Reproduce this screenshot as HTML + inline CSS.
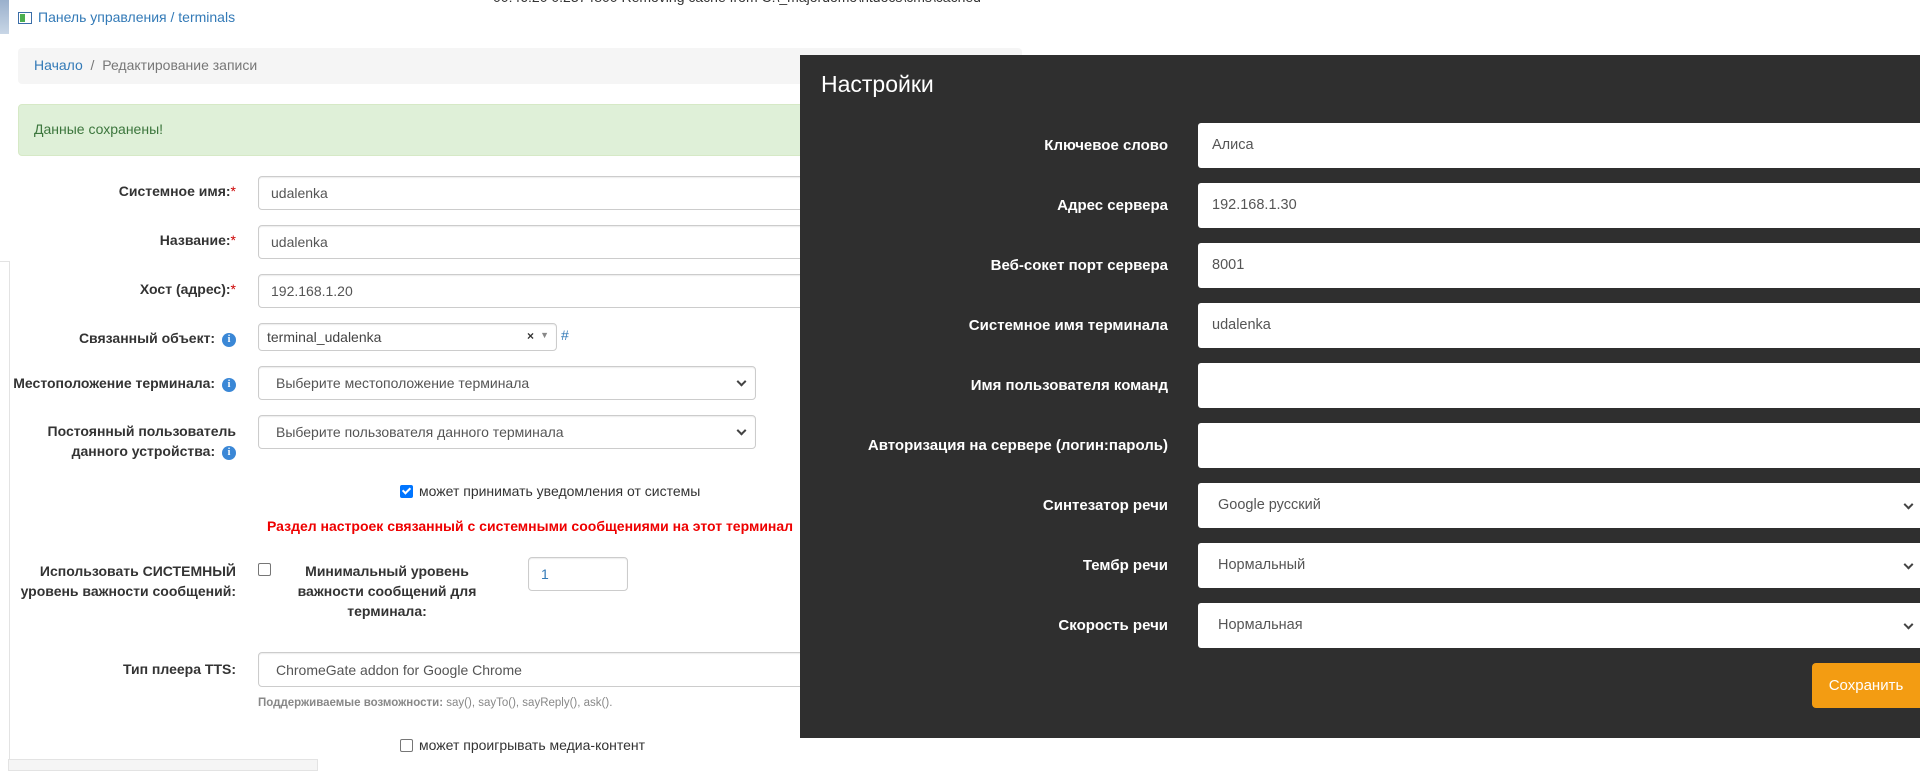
<!DOCTYPE html>
<html><head><meta charset="utf-8"><style>
*{box-sizing:border-box;margin:0;padding:0}
body{width:1920px;height:771px;overflow:hidden;background:#fff;font-family:"Liberation Sans",Arial,sans-serif;font-size:14px;color:#333;position:relative}
.a{position:absolute}
.lbl{position:absolute;right:1684px;font-weight:bold;text-align:right;white-space:nowrap;line-height:20px}
.inp{position:absolute;left:258px;border:1px solid #ccc;border-radius:4px;background:#fff;padding:0 12px;display:flex;align-items:center;color:#555;box-shadow:inset 0 1px 1px rgba(0,0,0,.075)}
.req{color:#c00;font-weight:normal}
.info{display:inline-block;width:14px;height:14px;border-radius:50%;background:#3a87d6;color:#fff;font-size:10px;text-align:center;line-height:14px;font-weight:bold;vertical-align:1px;margin-left:3px;font-family:"Liberation Serif",serif}
.chev{position:absolute;right:10px;top:50%;width:7px;height:7px;border-right:2px solid #444;border-bottom:2px solid #444;transform:translateY(-70%) rotate(45deg)}
.cb{display:inline-block;width:13px;height:13px;border:1px solid #767676;border-radius:2px;vertical-align:-2px;margin-right:6px;background:#fff}
.dk{position:absolute;left:800px;top:55px;width:1120px;height:683px;background:#2f2f2f}
.dl{position:absolute;right:752px;color:#fff;font-weight:bold;font-size:15px;text-align:right;white-space:nowrap;height:45px;line-height:45px}
.di{position:absolute;left:398px;width:722px;height:45px;background:#fff;border-radius:3px 0 0 3px;color:#555;font-size:14.5px;line-height:45px;padding-left:14px}
.di.s{padding-left:20px}
</style></head><body>
<div class="a" style="left:0;top:0;width:9px;height:34px;background:linear-gradient(#9ab0cc,#c8d6e6)"></div>
<div class="a" style="left:493px;top:-11px;font-size:14px;color:#333;white-space:nowrap">00:46:20 0.2374800 Removing cache from C:\_majordomo\htdocs\cms\cached</div>
<div class="a" style="left:18px;top:12px;width:14px;height:12px;border:1px solid #3a6da8;background:#fff"><div style="position:absolute;left:1px;top:1px;width:5px;height:8px;background:#4caf50"></div></div>
<div class="a" style="left:38px;top:9px;color:#337ab7;font-size:14px">Панель управления / terminals</div>
<div class="a" style="left:18px;top:48px;width:1004px;height:36px;background:#f5f5f5;border-radius:4px"></div>
<div class="a" style="left:34px;top:57px;color:#777"><span style="color:#337ab7">Начало</span>&nbsp; / &nbsp;Редактирование записи</div>
<div class="a" style="left:18px;top:104px;width:800px;height:52px;background:#dff0d8;border:1px solid #d6e9c6;border-radius:4px 0 0 4px"></div>
<div class="a" style="left:34px;top:121px;color:#3c763d">Данные сохранены!</div>
<div class="a" style="left:0;top:261px;width:10px;height:1px;background:#e3e3e3"></div>
<div class="a" style="left:9px;top:261px;width:1px;height:510px;background:#e3e3e3"></div>
<div class="a" style="left:8px;top:759px;width:310px;height:12px;background:#f5f5f5;border:1px solid #e3e3e3"></div>

<div class="lbl" style="top:181px">Системное имя:<span class="req">*</span></div>
<div class="inp" style="top:176px;width:560px;height:34px">udalenka</div>
<div class="lbl" style="top:230px">Название:<span class="req">*</span></div>
<div class="inp" style="top:225px;width:560px;height:34px">udalenka</div>
<div class="lbl" style="top:279px">Хост (адрес):<span class="req">*</span></div>
<div class="inp" style="top:274px;width:560px;height:34px">192.168.1.20</div>
<div class="lbl" style="top:328px">Связанный объект: <span class="info">i</span></div>
<div class="inp" style="top:323px;width:299px;height:28px;padding-left:8px;color:#444">terminal_udalenka<span class="a" style="right:22px;top:5px;font-weight:bold;font-size:12px;color:#333">×</span><span class="a" style="right:7px;top:6px;font-size:9px;color:#888">▼</span></div>
<div class="a" style="left:561px;top:327px;color:#337ab7">#</div>
<div class="lbl" style="top:373px">Местоположение терминала: <span class="info">i</span></div>
<div class="inp" style="top:366px;width:498px;height:34px;padding-left:17px">Выберите местоположение терминала<span class="chev"></span></div>
<div class="lbl" style="top:421px;line-height:20px">Постоянный пользователь<br>данного устройства: <span class="info">i</span></div>
<div class="inp" style="top:415px;width:498px;height:34px;padding-left:17px">Выберите пользователя данного терминала<span class="chev"></span></div>
<div class="a" style="left:400px;top:483px;white-space:nowrap"><span class="cb" style="background:#0075ff;border-color:#0075ff;position:relative"><span style="position:absolute;left:3px;top:0px;width:5px;height:8px;border-right:2px solid #fff;border-bottom:2px solid #fff;transform:rotate(45deg)"></span></span>может принимать уведомления от системы</div>
<div class="a" style="left:267px;top:518px;color:#e00;font-weight:bold;white-space:nowrap">Раздел настроек связанный с системными сообщениями на этот терминал</div>
<div class="lbl" style="top:561px;line-height:20px">Использовать СИСТЕМНЫЙ<br>уровень важности сообщений:</div>
<div class="a" style="left:258px;top:561px"><span class="cb"></span></div>
<div class="a" style="left:287px;top:561px;width:200px;text-align:center;font-weight:bold;line-height:20px">Минимальный уровень<br>важности сообщений для<br>терминала:</div>
<div class="inp" style="left:528px;top:557px;width:100px;height:34px;color:#337ab7">1</div>
<div class="lbl" style="top:659px">Тип плеера TTS:</div>
<div class="inp" style="top:652px;width:560px;height:35px;padding-left:17px">ChromeGate addon for Google Chrome</div>
<div class="a" style="left:258px;top:697px;font-size:11.5px;color:#888;white-space:nowrap"><b>Поддерживаемые возможности:</b> say(), sayTo(), sayReply(), ask().</div>
<div class="a" style="left:400px;top:737px;white-space:nowrap"><span class="cb"></span>может проигрывать медиа-контент</div>

<div class="dk">
<div class="a" style="left:21px;top:16px;color:#fff;font-size:23px">Настройки</div>
<div class="dl" style="top:68px">Ключевое слово</div><div class="di" style="top:68px">Алиса</div>
<div class="dl" style="top:128px">Адрес сервера</div><div class="di" style="top:128px">192.168.1.30</div>
<div class="dl" style="top:188px">Веб-сокет порт сервера</div><div class="di" style="top:188px">8001</div>
<div class="dl" style="top:248px">Системное имя терминала</div><div class="di" style="top:248px">udalenka</div>
<div class="dl" style="top:308px">Имя пользователя команд</div><div class="di" style="top:308px"></div>
<div class="dl" style="top:368px">Авторизация на сервере (логин:пароль)</div><div class="di" style="top:368px"></div>
<div class="dl" style="top:428px">Синтезатор речи</div><div class="di s" style="top:428px">Google русский<span class="chev" style="right:8px"></span></div>
<div class="dl" style="top:488px">Тембр речи</div><div class="di s" style="top:488px">Нормальный<span class="chev" style="right:8px"></span></div>
<div class="dl" style="top:548px">Скорость речи</div><div class="di s" style="top:548px">Нормальная<span class="chev" style="right:8px"></span></div>
<div class="a" style="left:1012px;top:608px;width:108px;height:45px;background:#f39c12;border-radius:4px 0 0 4px;color:#fff;font-size:15px;line-height:45px;text-align:center">Сохранить</div>
</div>
</body></html>
